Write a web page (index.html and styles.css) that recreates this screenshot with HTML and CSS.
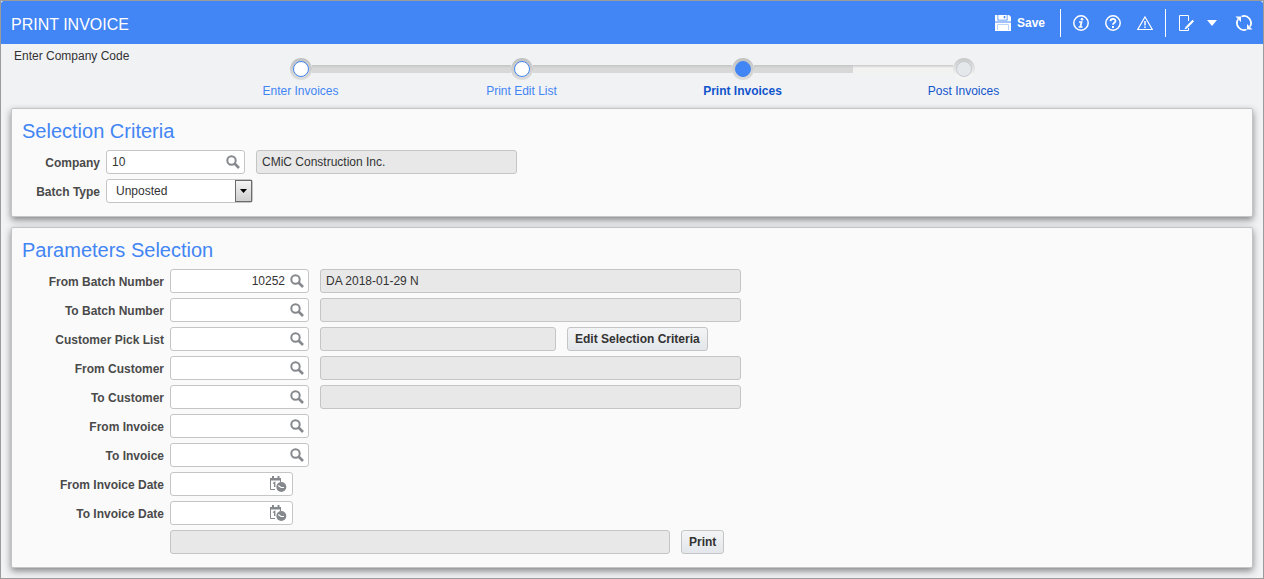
FILE: index.html
```html
<!DOCTYPE html>
<html lang="en">
<head>
<meta charset="utf-8">
<title>Print Invoice</title>
<link rel="stylesheet" href="styles.css">
</head>
<body>
<svg class="symbols" aria-hidden="true">
  <symbol id="search" viewBox="0 0 14 14">
    <circle cx="5.500" cy="5.500" r="4.200" fill="none" stroke="#85898d" stroke-width="2"/>
    <path d="M8.500 8.500 L13 13" stroke="#85898d" stroke-width="2.600"/>
  </symbol>
  <symbol id="calendar" viewBox="0 0 17 16">
    <path d="M0 2h11v2.500H0zM2 0h2v3H2zM7.500 0h2v3h-2z" fill="#85898d"/>
    <path d="M.5 4V13.500H5M10.500 4V6" fill="none" stroke="#85898d"/>
    <path d="M3 7.500L4.700 6.500V11" fill="none" stroke="#85898d" stroke-width="1.400"/>
    <circle cx="11.300" cy="11" r="5" fill="#85898d"/>
    <path d="M8.300 9.500L11 11.500H14" fill="none" stroke="#fff" stroke-width="1.200"/>
  </symbol>
</svg>
<div class="page">
  <header class="header">
    <h1 class="header-title">PRINT INVOICE</h1>
    <div class="toolbar">
      <button class="tool tool-save" type="button">
        <svg width="16" height="16" viewBox="0 0 16 16"><path fill="#fff" fill-rule="evenodd" d="M0 0h2.500v5.500h10V0H14l2 2v14H0zM3.500 0h8v4.500h-8zM8.500 1v2.500h2V1z"/><path fill="#fff" fill-rule="evenodd" d="M3.500 0h8v4.500h-8zM8.500 1v2.500h2V1z"/><path d="M0 7h16" stroke="#4285f4"/><path d="M2.500 15V9.500H13.500V15" fill="none" stroke="#b9d2fb"/></svg>
        <span>Save</span>
      </button>
      <span class="separator"></span>
      <button class="tool" type="button" aria-label="Information">
        <svg width="16" height="16" viewBox="0 0 16 16"><circle cx="8" cy="8" r="7.200" fill="none" stroke="#fff" stroke-width="1.500"/><circle cx="9" cy="4.300" r="1.300" fill="#fff"/><path d="M6 7h2.600L7.300 12H9.500M5.600 12h2" fill="none" stroke="#fff" stroke-width="1.700"/></svg>
      </button>
      <button class="tool" type="button" aria-label="Help">
        <svg width="16" height="16" viewBox="0 0 16 16"><circle cx="8" cy="8" r="7.200" fill="none" stroke="#fff" stroke-width="1.500"/><path d="M5.500 6.300C5.500 3.200 10.500 3.200 10.500 6C10.500 7.800 8 7.600 8 9.800" fill="none" stroke="#fff" stroke-width="1.800"/><path d="M7 11h2v2H7z" fill="#fff"/></svg>
      </button>
      <button class="tool" type="button" aria-label="Warnings">
        <svg width="16" height="16" viewBox="0 0 16 16"><path d="M8 2L15.300 14.500H.7z" fill="none" stroke="#fff" stroke-width="1.200"/><path d="M8 6v4.500M8 11.500v1.500" stroke="#fff" stroke-width="1.500"/></svg>
      </button>
      <span class="separator"></span>
      <button class="tool tool-menu" type="button" aria-label="Edit">
        <svg width="17" height="16" viewBox="0 0 17 16"><path d="M10.500 6V.5H1.500V15.500H10.500V13" fill="none" stroke="#fff"/><path d="M15.300 5.500L9 12" stroke="#fff" stroke-width="2.200"/><path d="M8 11L10 13L6.500 14.500z" fill="#fff"/></svg>
        <svg width="10" height="6" viewBox="0 0 10 6"><path d="M0 0h10L5 6z" fill="#fff"/></svg>
      </button>
      <button class="tool" type="button" aria-label="Refresh">
        <svg width="18" height="18" viewBox="0 0 18 18"><path d="M6.500 2.500A7 7 0 0 1 15 12.600M11.500 15.500A7 7 0 0 1 3 5.400" fill="none" stroke="#fff" stroke-width="1.800"/><path d="M.5 2.500H6V8zM17.500 15.500H12V10z" fill="#fff"/></svg>
      </button>
    </div>
  </header>
  <div class="progress">
    <p class="hint">Enter Company Code</p>
    <nav class="steps" aria-label="Invoice process">
      <a class="step" href="#"><span class="track"><i class="line none"></i><i class="dot"></i><i class="line"></i></span>Enter Invoices</a>
      <a class="step" href="#"><span class="track"><i class="line"></i><i class="dot"></i><i class="line"></i></span>Print Edit List</a>
      <a class="step current" href="#" aria-current="step"><span class="track"><i class="line"></i><i class="dot"></i><i class="line"></i></span>Print Invoices</a>
      <a class="step next" href="#"><span class="track"><i class="line"></i><i class="dot"></i><i class="line none"></i></span>Post Invoices</a>
    </nav>
  </div>
  <main class="panels">
    <section class="panel criteria">
      <h2 class="panel-title">Selection Criteria</h2>
      <div class="form">
        <div class="row">
          <label class="label" for="company">Company</label>
          <div class="fields">
            <span class="lookup"><input class="entry" id="company" type="text" value="10"><button class="pick" type="button" aria-label="Find company"><svg width="14" height="14"><use href="#search"/></svg></button></span>
            <input class="output w-name" type="text" value="CMiC Construction Inc." aria-label="Company name" readonly>
          </div>
        </div>
        <div class="row">
          <label class="label" for="type">Batch Type</label>
          <div class="fields">
            <span class="choice"><select class="select" id="type"><option>Unposted</option><option>Posted</option></select><span class="arrow"><svg width="7" height="4" viewBox="0 0 7 4"><path d="M0 0h7L3.500 4z"/></svg></span></span>
          </div>
        </div>
      </div>
    </section>
    <section class="panel parameters">
      <h2 class="panel-title">Parameters Selection</h2>
      <div class="form">
        <div class="row">
          <label class="label" for="from-batch">From Batch Number</label>
          <div class="fields">
            <span class="lookup"><input class="entry number" id="from-batch" type="text" value="10252"><button class="pick" type="button" aria-label="Find from batch"><svg width="14" height="14"><use href="#search"/></svg></button></span>
            <input class="output w-wide" type="text" value="DA 2018-01-29 N" aria-label="From batch description" readonly>
          </div>
        </div>
        <div class="row">
          <label class="label" for="to-batch">To Batch Number</label>
          <div class="fields">
            <span class="lookup"><input class="entry number" id="to-batch" type="text"><button class="pick" type="button" aria-label="Find to batch"><svg width="14" height="14"><use href="#search"/></svg></button></span>
            <input class="output w-wide" type="text" aria-label="To batch description" readonly>
          </div>
        </div>
        <div class="row">
          <label class="label" for="pick-list">Customer Pick List</label>
          <div class="fields">
            <span class="lookup"><input class="entry" id="pick-list" type="text"><button class="pick" type="button" aria-label="Find pick list"><svg width="14" height="14"><use href="#search"/></svg></button></span>
            <input class="output w-list" type="text" aria-label="Pick list description" readonly>
            <button class="button" type="button">Edit Selection Criteria</button>
          </div>
        </div>
        <div class="row">
          <label class="label" for="from-customer">From Customer</label>
          <div class="fields">
            <span class="lookup"><input class="entry" id="from-customer" type="text"><button class="pick" type="button" aria-label="Find from customer"><svg width="14" height="14"><use href="#search"/></svg></button></span>
            <input class="output w-wide" type="text" aria-label="From customer name" readonly>
          </div>
        </div>
        <div class="row">
          <label class="label" for="to-customer">To Customer</label>
          <div class="fields">
            <span class="lookup"><input class="entry" id="to-customer" type="text"><button class="pick" type="button" aria-label="Find to customer"><svg width="14" height="14"><use href="#search"/></svg></button></span>
            <input class="output w-wide" type="text" aria-label="To customer name" readonly>
          </div>
        </div>
        <div class="row">
          <label class="label" for="from-invoice">From Invoice</label>
          <div class="fields">
            <span class="lookup"><input class="entry" id="from-invoice" type="text"><button class="pick" type="button" aria-label="Find from invoice"><svg width="14" height="14"><use href="#search"/></svg></button></span>
          </div>
        </div>
        <div class="row">
          <label class="label" for="to-invoice">To Invoice</label>
          <div class="fields">
            <span class="lookup"><input class="entry" id="to-invoice" type="text"><button class="pick" type="button" aria-label="Find to invoice"><svg width="14" height="14"><use href="#search"/></svg></button></span>
          </div>
        </div>
        <div class="row">
          <label class="label" for="from-date">From Invoice Date</label>
          <div class="fields">
            <span class="lookup date"><input class="entry" id="from-date" type="text"><button class="pick" type="button" aria-label="Choose from date"><svg width="17" height="16"><use href="#calendar"/></svg></button></span>
          </div>
        </div>
        <div class="row">
          <label class="label" for="to-date">To Invoice Date</label>
          <div class="fields">
            <span class="lookup date"><input class="entry" id="to-date" type="text"><button class="pick" type="button" aria-label="Choose to date"><svg width="17" height="16"><use href="#calendar"/></svg></button></span>
          </div>
        </div>
        <div class="row">
          <span class="label"></span>
          <div class="fields">
            <input class="output w-full" type="text" aria-label="Print status" readonly>
            <button class="button" type="button">Print</button>
          </div>
        </div>
      </div>
    </section>
  </main>
</div>
</body>
</html>
```

FILE: styles.css
```css
* {
  box-sizing: border-box;
}

body {
  margin: 0;
  background: #f1f2f4;
  color: #333;
  font: 12px/16px "Liberation Sans", Arial, sans-serif;
}

button,
input,
select {
  margin: 0;
  font: inherit;
  color: inherit;
}

svg {
  display: block;
  flex: none;
}

.symbols {
  position: absolute;
  width: 0;
  height: 0;
}

.page {
  min-height: 100vh;
  border: 1px solid #9b9b9b;
}

/* Header */
.header {
  display: flex;
  align-items: center;
  justify-content: space-between;
  height: 43px;
  padding: 0 10px;
  border-radius: 3px 3px 0 0;
  background: #4285f4;
  color: #fff;
}

.header-title {
  margin: 0;
  padding-top: 4px;
  font-size: 16px;
  line-height: 20px;
  font-weight: normal;
}

.toolbar {
  display: flex;
  align-items: center;
  gap: 16px;
}

.tool {
  display: flex;
  align-items: center;
  gap: 6px;
  padding: 0;
  border: 0;
  background: none;
  font-weight: bold;
}

.tool-save {
  margin-right: 3px;
}

.tool-menu {
  gap: 12px;
  margin-right: 2px;
}

.separator {
  width: 1px;
  height: 28px;
  margin: 0 -4px;
  background: #fff;
}

/* Process steps */
.progress {
  display: grid;
  grid-template-columns: minmax(0, 1fr) minmax(0, 884px) minmax(0, 1fr);
  height: 64px;
}

.hint {
  margin: 0;
  padding: 4px 0 0 13px;
  white-space: nowrap;
}

.steps {
  display: grid;
  grid-template-columns: repeat(4, 1fr);
  padding-top: 14px;
}

.step {
  color: #4285f4;
  text-align: center;
  text-decoration: none;
}

.track {
  display: flex;
  align-items: center;
  height: 22px;
  margin-bottom: 3px;
}

.line {
  flex: 1;
  height: 8px;
  background: linear-gradient(#c2c3c3, #d8d8d8 3px);
}

.dot {
  display: grid;
  place-items: center;
  width: 22px;
  height: 22px;
  border-radius: 50%;
  background: linear-gradient(#c0c1c1, #dcdcdc);
}

.dot::after {
  content: "";
  width: 14px;
  height: 14px;
  border: 1px solid #4285f4;
  border-radius: 50%;
  background: #fff;
}

.current {
  color: #1155cc;
  font-weight: bold;
}

.current .dot::after {
  background: #4285f4;
}

.next {
  color: #1155cc;
}

.next .line {
  background: linear-gradient(#c8c9c9, #f2f2f0 3px);
}

.next .dot {
  background: linear-gradient(#c6c7c7, #f5f5f4 80%);
}

.next .dot::after {
  border-color: #c6c9d0;
  background: #e5e8eb;
}

.line.none {
  background: none;
}

/* Panels */
.panels {
  display: grid;
  gap: 10px;
  padding: 0 10px 10px;
}

.panel {
  padding: 10px 10px 13px;
  border: 1px solid #c4c5c5;
  border-radius: 2px;
  background: #fafafa;
  box-shadow: 0 3px 7px rgba(0, 0, 0, 0.45);
}

.panel-title {
  margin: 0 0 7px;
  color: #4285f4;
  font-size: 20px;
  line-height: 24px;
  font-weight: normal;
}

.form {
  display: grid;
  gap: 5px;
}

.row,
.fields {
  display: flex;
}

.fields {
  gap: 11px;
}

.label {
  flex: none;
  padding: 5px 6px 0 0;
  color: #4a4a4a;
  font-weight: bold;
  text-align: right;
}

.criteria .label {
  width: 84px;
}

.parameters .label {
  width: 148px;
}

.lookup,
.choice,
.output,
.button {
  height: 24px;
  border: 1px solid #c4c5c5;
  border-radius: 3px;
}

.lookup {
  display: flex;
  width: 139px;
  background: #fff;
}

.date {
  width: 123px;
}

.entry {
  flex: 1;
  min-width: 0;
  padding: 0 0 1px 5px;
  border: 0;
  background: none;
}

.number {
  text-align: right;
}

.pick {
  display: flex;
  align-items: center;
  padding: 0 4px 0 5px;
  border: 0;
  background: none;
}

.date .pick {
  padding-right: 5px;
}

.choice {
  position: relative;
  width: 147px;
  background: #fff;
}

.select {
  display: block;
  width: 100%;
  height: 100%;
  padding: 0 20px 1px 9px;
  border: 0;
  background: none;
  appearance: none;
}

.arrow {
  position: absolute;
  top: 0;
  right: 0;
  bottom: 0;
  display: grid;
  place-items: center;
  width: 17px;
  border: 1px solid #6b6b6b;
  background: linear-gradient(#f4f4f4, #cfcfcf);
  pointer-events: none;
}

.output {
  min-width: 0;
  padding: 0 5px 1px;
  background: #e8e8e8;
}

.w-name {
  width: 261px;
}

.w-wide {
  width: 421px;
}

.w-list {
  width: 236px;
}

.w-full {
  width: 500px;
}

.button {
  padding: 0 7px 1px;
  background: linear-gradient(#f3f4f5, #e3e7eb);
  font-weight: bold;
  white-space: nowrap;
}
```
